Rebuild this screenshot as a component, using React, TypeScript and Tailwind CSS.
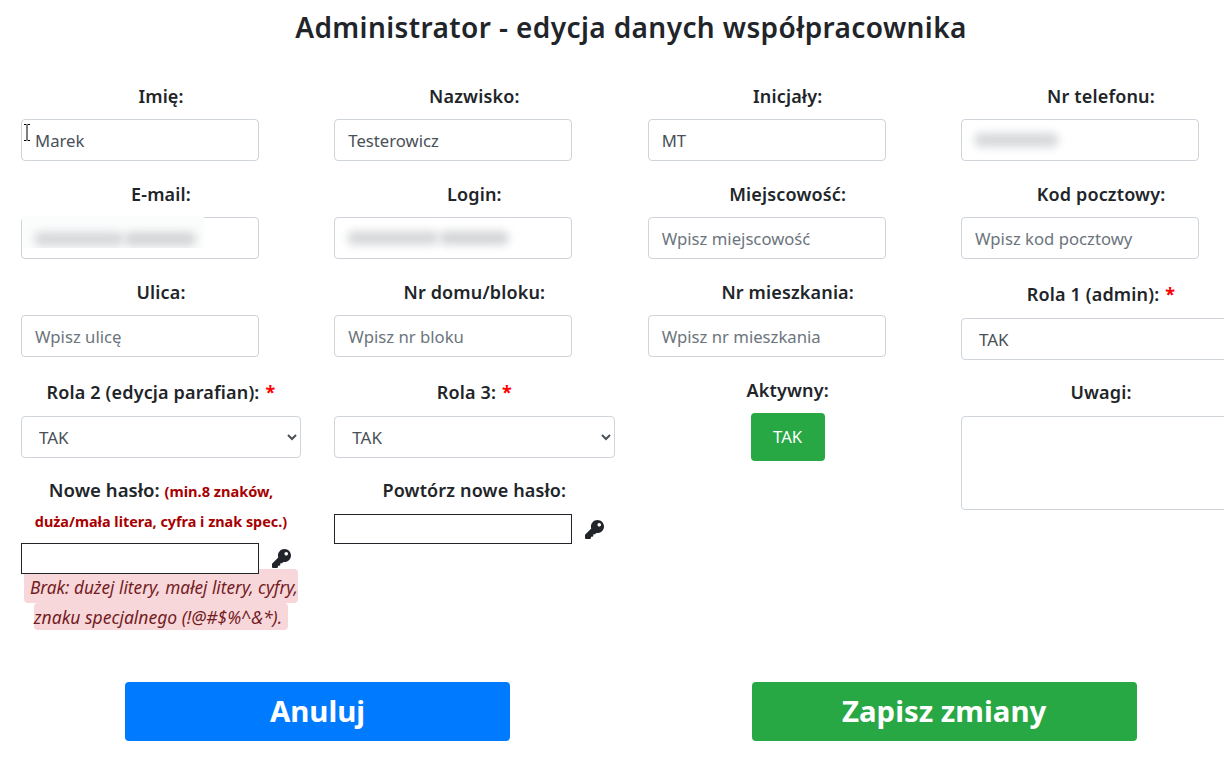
import type { ReactNode } from "react";
import { FaKey } from "react-icons/fa";

const labelClass = "text-center text-[18px] font-semibold leading-6 tracking-[0.15px] text-[#212529]";
const inputClass =
  "block w-[238px] h-[42px] rounded border border-[#ced4da] bg-white px-[13px] text-[16.7px] text-[#495057] placeholder:text-[#6c757d] outline-none";
const selectClass =
  "block h-[42px] rounded border border-[#ced4da] bg-white pl-[13px] pr-1 text-[17px] text-[#495057] outline-none";

const Required = () => <span className="ml-[6px] text-[18px] font-bold leading-6 text-[#ff0000]">*</span>;

const Blur = ({ w, shade = "bg-[#d6d8da]" }: { w: string; shade?: string }) => (
  <span className={`inline-block h-[14px] rounded-full blur-[4px] ${w} ${shade}`} />
);

const TextField = ({ label, value, placeholder }: { label: string; value?: string; placeholder?: string }) => (
  <div className="mb-[21px] h-[77px]">
    <div className={`${labelClass} mb-[11px]`}>{label}</div>
    <input className={inputClass} defaultValue={value} placeholder={placeholder} />
  </div>
);

const BlurField = ({ label, children, patch }: { label: string; children: ReactNode; patch?: boolean }) => (
  <div className="mb-[21px] h-[77px]">
    <div className={`${labelClass} mb-[11px]`}>{label}</div>
    <div className="relative">
      <input className={inputClass} />
      <div
        className={`absolute left-[1px] flex pl-[12px] ${
          patch ? "top-[-1px] h-[32px] w-[182px] items-end overflow-hidden bg-[#fbfcfc] pb-[2px]" : "top-0 h-[42px] items-center"
        }`}
      >
        {children}
      </div>
    </div>
  </div>
);

const SelectField = ({ label, selectWidth = "w-full" }: { label: string; selectWidth?: string }) => (
  <div className="pt-[2px]">
    <div className={`${labelClass} mb-3`}>
      {label}
      <Required />
    </div>
    <select className={`${selectClass} ${selectWidth}`} defaultValue="TAK">
      <option>TAK</option>
      <option>NIE</option>
    </select>
  </div>
);

const PasswordInput = ({ height = "h-[31px]" }: { height?: string }) => (
  <div className="relative z-10 flex items-center gap-[13px]">
    <input type="password" className={`block w-[238px] border border-[#212529] bg-white ${height}`} />
    <FaKey className="h-[19px] w-[19px] text-[#212529]" />
  </div>
);

const TextCursor = () => (
  <svg className="absolute left-[2px] top-[5px]" width="8" height="17" viewBox="0 0 8 17" fill="none" stroke="#000" strokeWidth="1">
    <path d="M1 .5h2.5M4.5 .5H7M4 1v15M1 16.500h2.500M4.500 16.500H7" />
  </svg>
);

export default function App() {
  return (
    <div className="h-[766px] w-[1224px] overflow-hidden bg-white font-['Noto_Sans',sans-serif] text-[#212529]">
      <h1 className="w-[1262px] pt-[9px] text-center text-[28px] font-semibold leading-9 tracking-[0.4px]">
        Administrator - edycja danych współpracownika
      </h1>

      <div className="mt-[39px] flex w-[1300px] gap-[33.33px] pl-[21px]">
        <div className="w-[280px] shrink-0">
          <div className="relative">
            <TextField label="Imię:" value="Marek" />
            <div className="absolute left-0 top-[35px]">
              <TextCursor />
            </div>
          </div>
          <BlurField label="E-mail:" patch>
            <Blur w="w-[90px]" />
            <Blur w="w-[72px]" shade="bg-[#d3d5d7]" />
          </BlurField>
          <TextField label="Ulica:" placeholder="Wpisz ulicę" />
          <SelectField label="Rola 2 (edycja parafian):" />
          <div className="mt-[16px]">
            <div className="whitespace-nowrap text-center text-[18.6px] font-semibold leading-[31px] text-[#212529]">
              Nowe hasło: <span className="text-[14.6px] font-bold text-[#a80000]">(min.8 znaków,</span>
            </div>
            <div className="text-center text-[14.4px] font-bold leading-[30px] text-[#a80000]">
              duża/mała litera, cyfra i znak spec.)
            </div>
            <div className="mt-[6px]">
              <PasswordInput />
            </div>
            <div className="-mt-[5px] flex flex-col items-center text-[17.2px] italic text-[#721c24]">
              <span className="flex h-[34px] items-end whitespace-nowrap rounded bg-[#f8d7da] pb-[1px] pl-[6px] leading-7">
                Brak: dużej litery, małej litery, cyfry,
              </span>
              <span className="flex h-[27px] items-center whitespace-nowrap rounded bg-[#f8d7da] pr-[6px] text-[17.5px] leading-7">
                znaku specjalnego (!@#$%^&amp;*).
              </span>
            </div>
          </div>
          <a className="ml-[104px] mt-[52px] flex h-[59px] w-[385px] items-center justify-center rounded bg-[#007bff] text-[29.4px] font-bold text-white">
            Anuluj
          </a>
        </div>

        <div className="w-[280px] shrink-0">
          <TextField label="Nazwisko:" value="Testerowicz" />
          <BlurField label="Login:">
            <Blur w="w-[92px]" />
            <Blur w="w-[70px]" shade="bg-[#d3d5d7]" />
          </BlurField>
          <TextField label="Nr domu/bloku:" placeholder="Wpisz nr bloku" />
          <SelectField label="Rola 3:" selectWidth="w-[281px]" />
          <div className="mt-[20px]">
            <div className={`${labelClass} mb-3`}>Powtórz nowe hasło:</div>
            <PasswordInput height="h-[30px]" />
          </div>
        </div>

        <div className="w-[280px] shrink-0">
          <TextField label="Inicjały:" value="MT" />
          <TextField label="Miejscowość:" placeholder="Wpisz miejscowość" />
          <TextField label="Nr mieszkania:" placeholder="Wpisz nr mieszkania" />
          <div className={`${labelClass} mb-[11px]`}>Aktywny:</div>
          <button className="mx-auto block h-[48px] w-[74px] rounded bg-[#28a745] text-[16.7px] text-white">TAK</button>
          <a className="ml-[104px] mt-[221px] flex h-[59px] w-[385px] items-center justify-center rounded bg-[#28a745] text-[29.4px] font-bold text-white">
            Zapisz zmiany
          </a>
        </div>

        <div className="w-[280px] shrink-0">
          <BlurField label="Nr telefonu:">
            <Blur w="w-[85px]" />
          </BlurField>
          <TextField label="Kod pocztowy:" placeholder="Wpisz kod pocztowy" />
          <SelectField label="Rola 1 (admin):" />
          <div className={`${labelClass} mb-3 mt-[20px]`}>Uwagi:</div>
          <textarea className="block h-[94px] w-full resize-none rounded border border-[#ced4da] bg-white" />
        </div>
      </div>
    </div>
  );
}
